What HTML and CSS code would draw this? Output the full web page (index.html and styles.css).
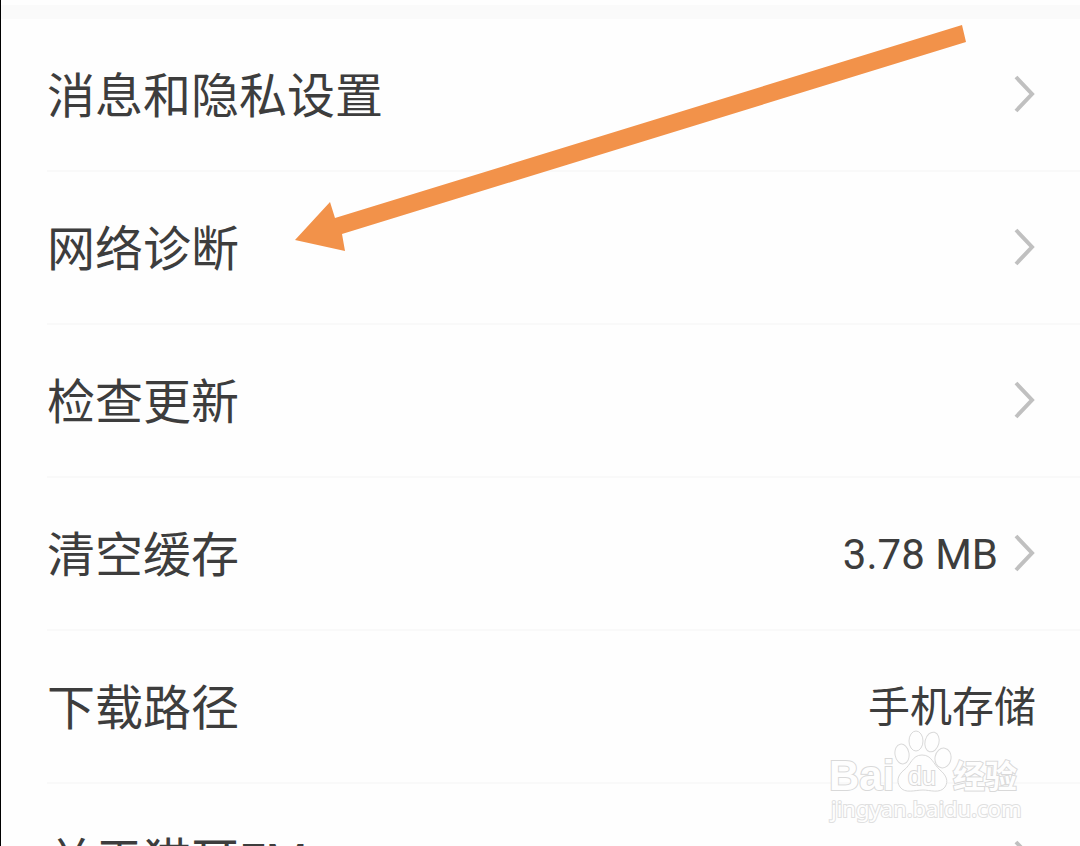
FILE: index.html
```html
<!DOCTYPE html>
<html lang="zh-CN">
<head>
<meta charset="utf-8">
<meta name="viewport" content="width=device-width, initial-scale=1">
<title>设置</title>
<link rel="stylesheet" href="styles.css">
</head>
<body>
<main class="screen">
  <div class="section-gap"></div>
  <ul class="settings">
    <li class="item"><button class="row" type="button"><span class="label">消息和隐私设置</span><svg class="chevron" viewBox="0 0 22 38" aria-hidden="true"><path d="M2 2 18 19 2 36"/></svg></button></li>
    <li class="item"><button class="row" type="button"><span class="label">网络诊断</span><svg class="chevron" viewBox="0 0 22 38" aria-hidden="true"><path d="M2 2 18 19 2 36"/></svg></button></li>
    <li class="item"><button class="row" type="button"><span class="label">检查更新</span><svg class="chevron" viewBox="0 0 22 38" aria-hidden="true"><path d="M2 2 18 19 2 36"/></svg></button></li>
    <li class="item"><button class="row" type="button"><span class="label">清空缓存</span><span class="value">3.78 MB</span><svg class="chevron" viewBox="0 0 22 38" aria-hidden="true"><path d="M2 2 18 19 2 36"/></svg></button></li>
    <li class="item"><button class="row" type="button"><span class="label">下载路径</span><span class="value">手机存储</span></button></li>
    <li class="item"><button class="row" type="button"><span class="label">关于猫耳FM</span><svg class="chevron" viewBox="0 0 22 38" aria-hidden="true"><path d="M2 2 18 19 2 36"/></svg></button></li>
  </ul>
  <svg class="pointer" viewBox="0 0 672 228" aria-hidden="true"><path d="M667 0 671 17 47 209 50 226 0 215 35 177 40 193Z"/></svg>
  <svg class="watermark" viewBox="0 0 200 96" role="img" aria-label="Baidu 经验 jingyan.baidu.com">
    <g class="mark">
      <text class="mark-latin" x="1" y="60">Bai</text>
      <ellipse cx="74" cy="24" rx="7" ry="10" transform="rotate(-10 74 24)"/>
      <ellipse cx="88" cy="11" rx="7" ry="10"/>
      <ellipse cx="104" cy="12" rx="7" ry="10" transform="rotate(14 104 12)"/>
      <ellipse cx="115" cy="28" rx="8" ry="10" transform="rotate(10 115 28)"/>
      <path d="M94 25C84 25 83 35 76 40C70 45 68 51 72 57C77 64 87 60 95 60C102 60 112 64 117 57C121 51 118 45 112 40C105 34 104 25 94 25Z"/>
      <text class="mark-du" x="80" y="55">du</text>
      <text class="mark-cjk" x="125" y="58">经验</text>
    </g>
    <text class="mark-url" x="3" y="87">jingyan.baidu.com</text>
  </svg>
</main>
</body>
</html>
```
FILE: styles.css
```css
* {
  box-sizing: border-box;
}

body {
  margin: 0;
  background: #fefefe;
  color: #3d3d3d;
  font-family: Roboto, "Noto Sans CJK SC", sans-serif;
}

.screen {
  position: relative;
  height: 100vh;
  overflow: hidden;
  border-left: 1px solid #000;
  padding-top: 5px;
}

.section-gap {
  height: 14px;
  background: #fafafa;
}

.settings {
  margin: 0;
  padding: 0 0 0 46px;
  list-style: none;
}

.item {
  border-bottom: 2px solid #f9f9f9;
}

.row {
  display: flex;
  align-items: center;
  gap: 16px;
  width: 100%;
  min-height: 151px;
  padding: 40px 44px 41px 0;
  border: 0;
  background: none;
  color: inherit;
  font: inherit;
  text-align: left;
}

.label {
  flex: 1;
  padding-top: 6px;
  font-size: 48px;
  line-height: 60px;
}

.value {
  padding-top: 4px;
  font-size: 42px;
  line-height: 60px;
}

.chevron {
  width: 22px;
  height: 38px;
  fill: none;
  stroke: #c0c0c0;
  stroke-width: 4;
}

.pointer {
  position: absolute;
  top: 25px;
  left: 294px;
  width: 672px;
  height: 228px;
  fill: #f2924a;
}

.watermark {
  position: absolute;
  top: 730px;
  right: 52px;
  width: 200px;
  height: 96px;
  overflow: visible;
}

.mark {
  fill: #fefefe;
  stroke: #d9d9d9;
  stroke-width: 1;
}

.mark text {
  paint-order: stroke;
  stroke-width: 2;
}

.mark-latin {
  font: bold 42px "Liberation Sans", sans-serif;
}

.mark .mark-du {
  font: 25px "Liberation Sans", sans-serif;
}

.mark-cjk {
  font: bold 32px "Noto Sans CJK SC", sans-serif;
}

.mark-url {
  font: 22px "Noto Sans", sans-serif;
  fill: #fefefe;
  stroke: #e0e0e0;
  stroke-width: 2;
  paint-order: stroke;
}
```
